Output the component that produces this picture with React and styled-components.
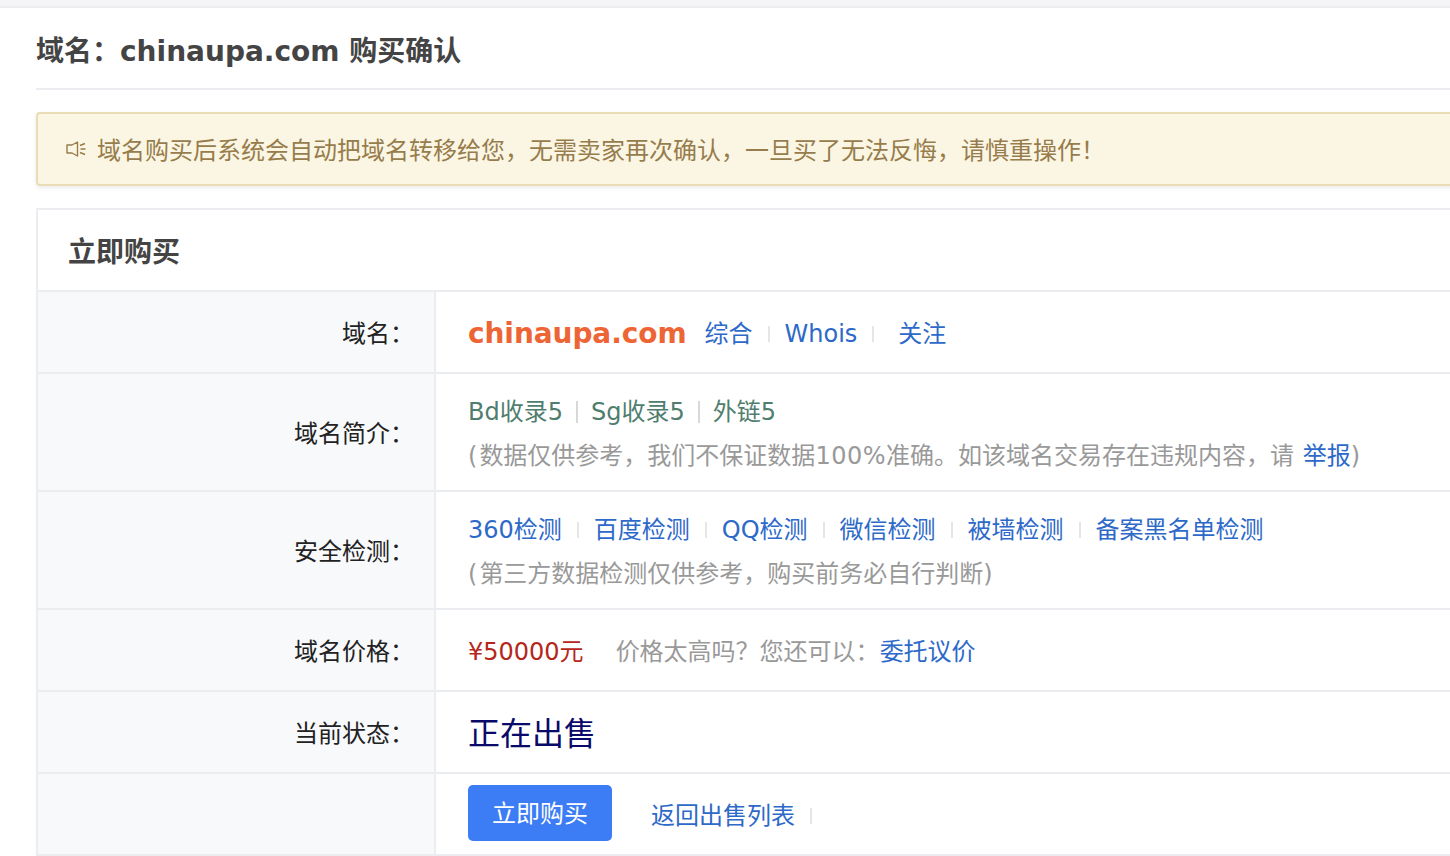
import React from 'react';
import styled, { createGlobalStyle } from 'styled-components';

const GlobalStyle = createGlobalStyle`
  html, body {
    margin: 0;
    padding: 0;
    height: 856px;
    overflow: hidden;
    background: #ffffff;
    font-family: "DejaVu Sans", "Noto Sans CJK SC", sans-serif;
  }
`;

const Page = styled.div`
  width: 1500px;
  border-top: 6px solid #f5f5f7;
`;

const Main = styled.main`
  border-top: 2px solid #ecedf1;
  padding: 0 0 0 36px;
`;

const PageTitle = styled.h1`
  margin: 0;
  height: 80px;
  line-height: 88px;
  font-size: 28px;
  font-weight: 700;
  color: #444444;
  border-bottom: 2px solid #ecedf1;
`;

const Alert = styled.div`
  margin-top: 22px;
  height: 70px;
  display: flex;
  align-items: center;
  gap: 10px;
  padding-left: 28px;
  background: #fbf6e3;
  border: 2px solid #eadcb6;
  border-radius: 4px;
  box-shadow: 0 2px 4px rgba(0, 0, 0, 0.08);
  color: #977c4c;
  font-size: 24px;
`;

const AlertText = styled.span`
  padding-bottom: 2px;
`;

const Panel = styled.section`
  margin-top: 22px;
  border: 2px solid #ecedf1;
  border-right: none;
`;

const PanelHead = styled.h2`
  margin: 0;
  height: 80px;
  line-height: 86px;
  padding-left: 30px;
  font-size: 28px;
  font-weight: 700;
  color: #444444;
`;

const Row = styled.div`
  display: grid;
  grid-template-columns: 398px 1fr;
  height: ${(p) => p.$height}px;
  border-top: 2px solid #ecedf1;
`;

const Label = styled.div`
  display: flex;
  align-items: center;
  justify-content: flex-end;
  padding: 0 20px 2px 0;
  background: #f8f9fb;
  border-right: 2px solid #ecedf1;
  font-size: 24px;
  color: #222222;
`;

const Value = styled.div`
  display: flex;
  flex-direction: column;
  justify-content: center;
  gap: 8px;
  padding: 3px 0 0 32px;
  font-size: 24px;
  line-height: 36px;
  white-space: nowrap;
`;

const Line = styled.div`
  display: flex;
  align-items: center;
`;

const DomainName = styled.span`
  font-size: 28px;
  font-weight: 700;
  color: #ee6535;
  margin-right: 18px;
  letter-spacing: -0.08px;
`;

const TextLink = styled.a`
  color: #2d69c9;
  text-decoration: none;
  margin-left: ${(p) => p.$indent || 0}px;
`;

const Sep = styled.i`
  display: inline-block;
  width: 2px;
  height: 16px;
  margin: 0 15px;
  background: #e6e6e6;
`;

const StatItem = styled.span`
  color: #4f7d6e;
`;

const StatSep = styled.i`
  display: inline-block;
  width: 2px;
  height: 22px;
  margin: 0 13px;
  background: #d8d8d8;
`;

const Note = styled.span`
  color: #999999;
  white-space: pre;
`;

const OpenParen = styled.span`
  margin-right: 2px;
`;

const Digits = styled.span`
  letter-spacing: 0.5px;
`;

const Price = styled.span`
  color: #b5271a;
  margin-right: 32px;
`;

const Status = styled.span`
  font-size: 32px;
  color: #0a0a6b;
`;

const BuyButton = styled.button`
  width: 144px;
  height: 56px;
  padding: 0 0 2px;
  margin: -6px 39px 0 0;
  border: none;
  border-radius: 5px;
  background: #3c7df5;
  color: #ffffff;
  font-family: inherit;
  font-size: 24px;
`;

const Speaker = () => (
  <svg width="21" height="16" viewBox="0 0 21 16" fill="none" stroke="#977c4c" strokeWidth="1.4">
    <path d="M1 4h5l5.500-3v14l-5.500-3H1z" strokeLinejoin="round" />
    <path d="M14 4.500l5-2M14.500 8h5M14 11.500l5 2" />
  </svg>
);

const checks = ['360检测', '百度检测', 'QQ检测', '微信检测', '被墙检测', '备案黑名单检测'];

export default function App() {
  return (
    <Page>
      <GlobalStyle />
      <Main>
        <PageTitle>域名&#xFF1A;chinaupa.com 购买确认</PageTitle>
        <Alert>
          <Speaker />
          <AlertText>域名购买后系统会自动把域名转移给您&#xFF0C;无需卖家再次确认&#xFF0C;一旦买了无法反悔&#xFF0C;请慎重操作&#xFF01;</AlertText>
        </Alert>
        <Panel>
          <PanelHead>立即购买</PanelHead>
          <Row $height={80}>
            <Label>域名&#xFF1A;</Label>
            <Value>
              <Line>
                <DomainName>chinaupa.com</DomainName>
                <TextLink>综合</TextLink>
                <Sep />
                <TextLink>Whois</TextLink>
                <Sep />
                <TextLink $indent={9}>关注</TextLink>
              </Line>
            </Value>
          </Row>
          <Row $height={116}>
            <Label>域名简介&#xFF1A;</Label>
            <Value>
              <Line>
                <StatItem>Bd收录5</StatItem>
                <StatSep />
                <StatItem>Sg收录5</StatItem>
                <StatSep />
                <StatItem>外链5</StatItem>
              </Line>
              <Line>
                <Note>
                  <OpenParen>(</OpenParen>数据仅供参考&#xFF0C;我们不保证数据<Digits>100%</Digits>准确。如该域名交易存在违规内容&#xFF0C;请&nbsp;
                </Note>
                <TextLink $indent={1}>举报</TextLink>
                <Note>)</Note>
              </Line>
            </Value>
          </Row>
          <Row $height={116}>
            <Label>安全检测&#xFF1A;</Label>
            <Value>
              <Line>
                {checks.map((name, i) => (
                  <React.Fragment key={name}>
                    {i > 0 && <Sep />}
                    <TextLink>{name}</TextLink>
                  </React.Fragment>
                ))}
              </Line>
              <Line>
                <Note>
                  <OpenParen>(</OpenParen>第三方数据检测仅供参考&#xFF0C;购买前务必自行判断)
                </Note>
              </Line>
            </Value>
          </Row>
          <Row $height={80}>
            <Label>域名价格&#xFF1A;</Label>
            <Value>
              <Line>
                <Price>¥50000元</Price>
                <Note>价格太高吗&#xFF1F;您还可以&#xFF1A;</Note>
                <TextLink>委托议价</TextLink>
              </Line>
            </Value>
          </Row>
          <Row $height={80}>
            <Label>当前状态&#xFF1A;</Label>
            <Value>
              <Line>
                <Status>正在出售</Status>
              </Line>
            </Value>
          </Row>
          <Row $height={80}>
            <Label />
            <Value>
              <Line>
                <BuyButton>立即购买</BuyButton>
                <TextLink>返回出售列表</TextLink>
                <Sep />
              </Line>
            </Value>
          </Row>
        </Panel>
      </Main>
    </Page>
  );
}
